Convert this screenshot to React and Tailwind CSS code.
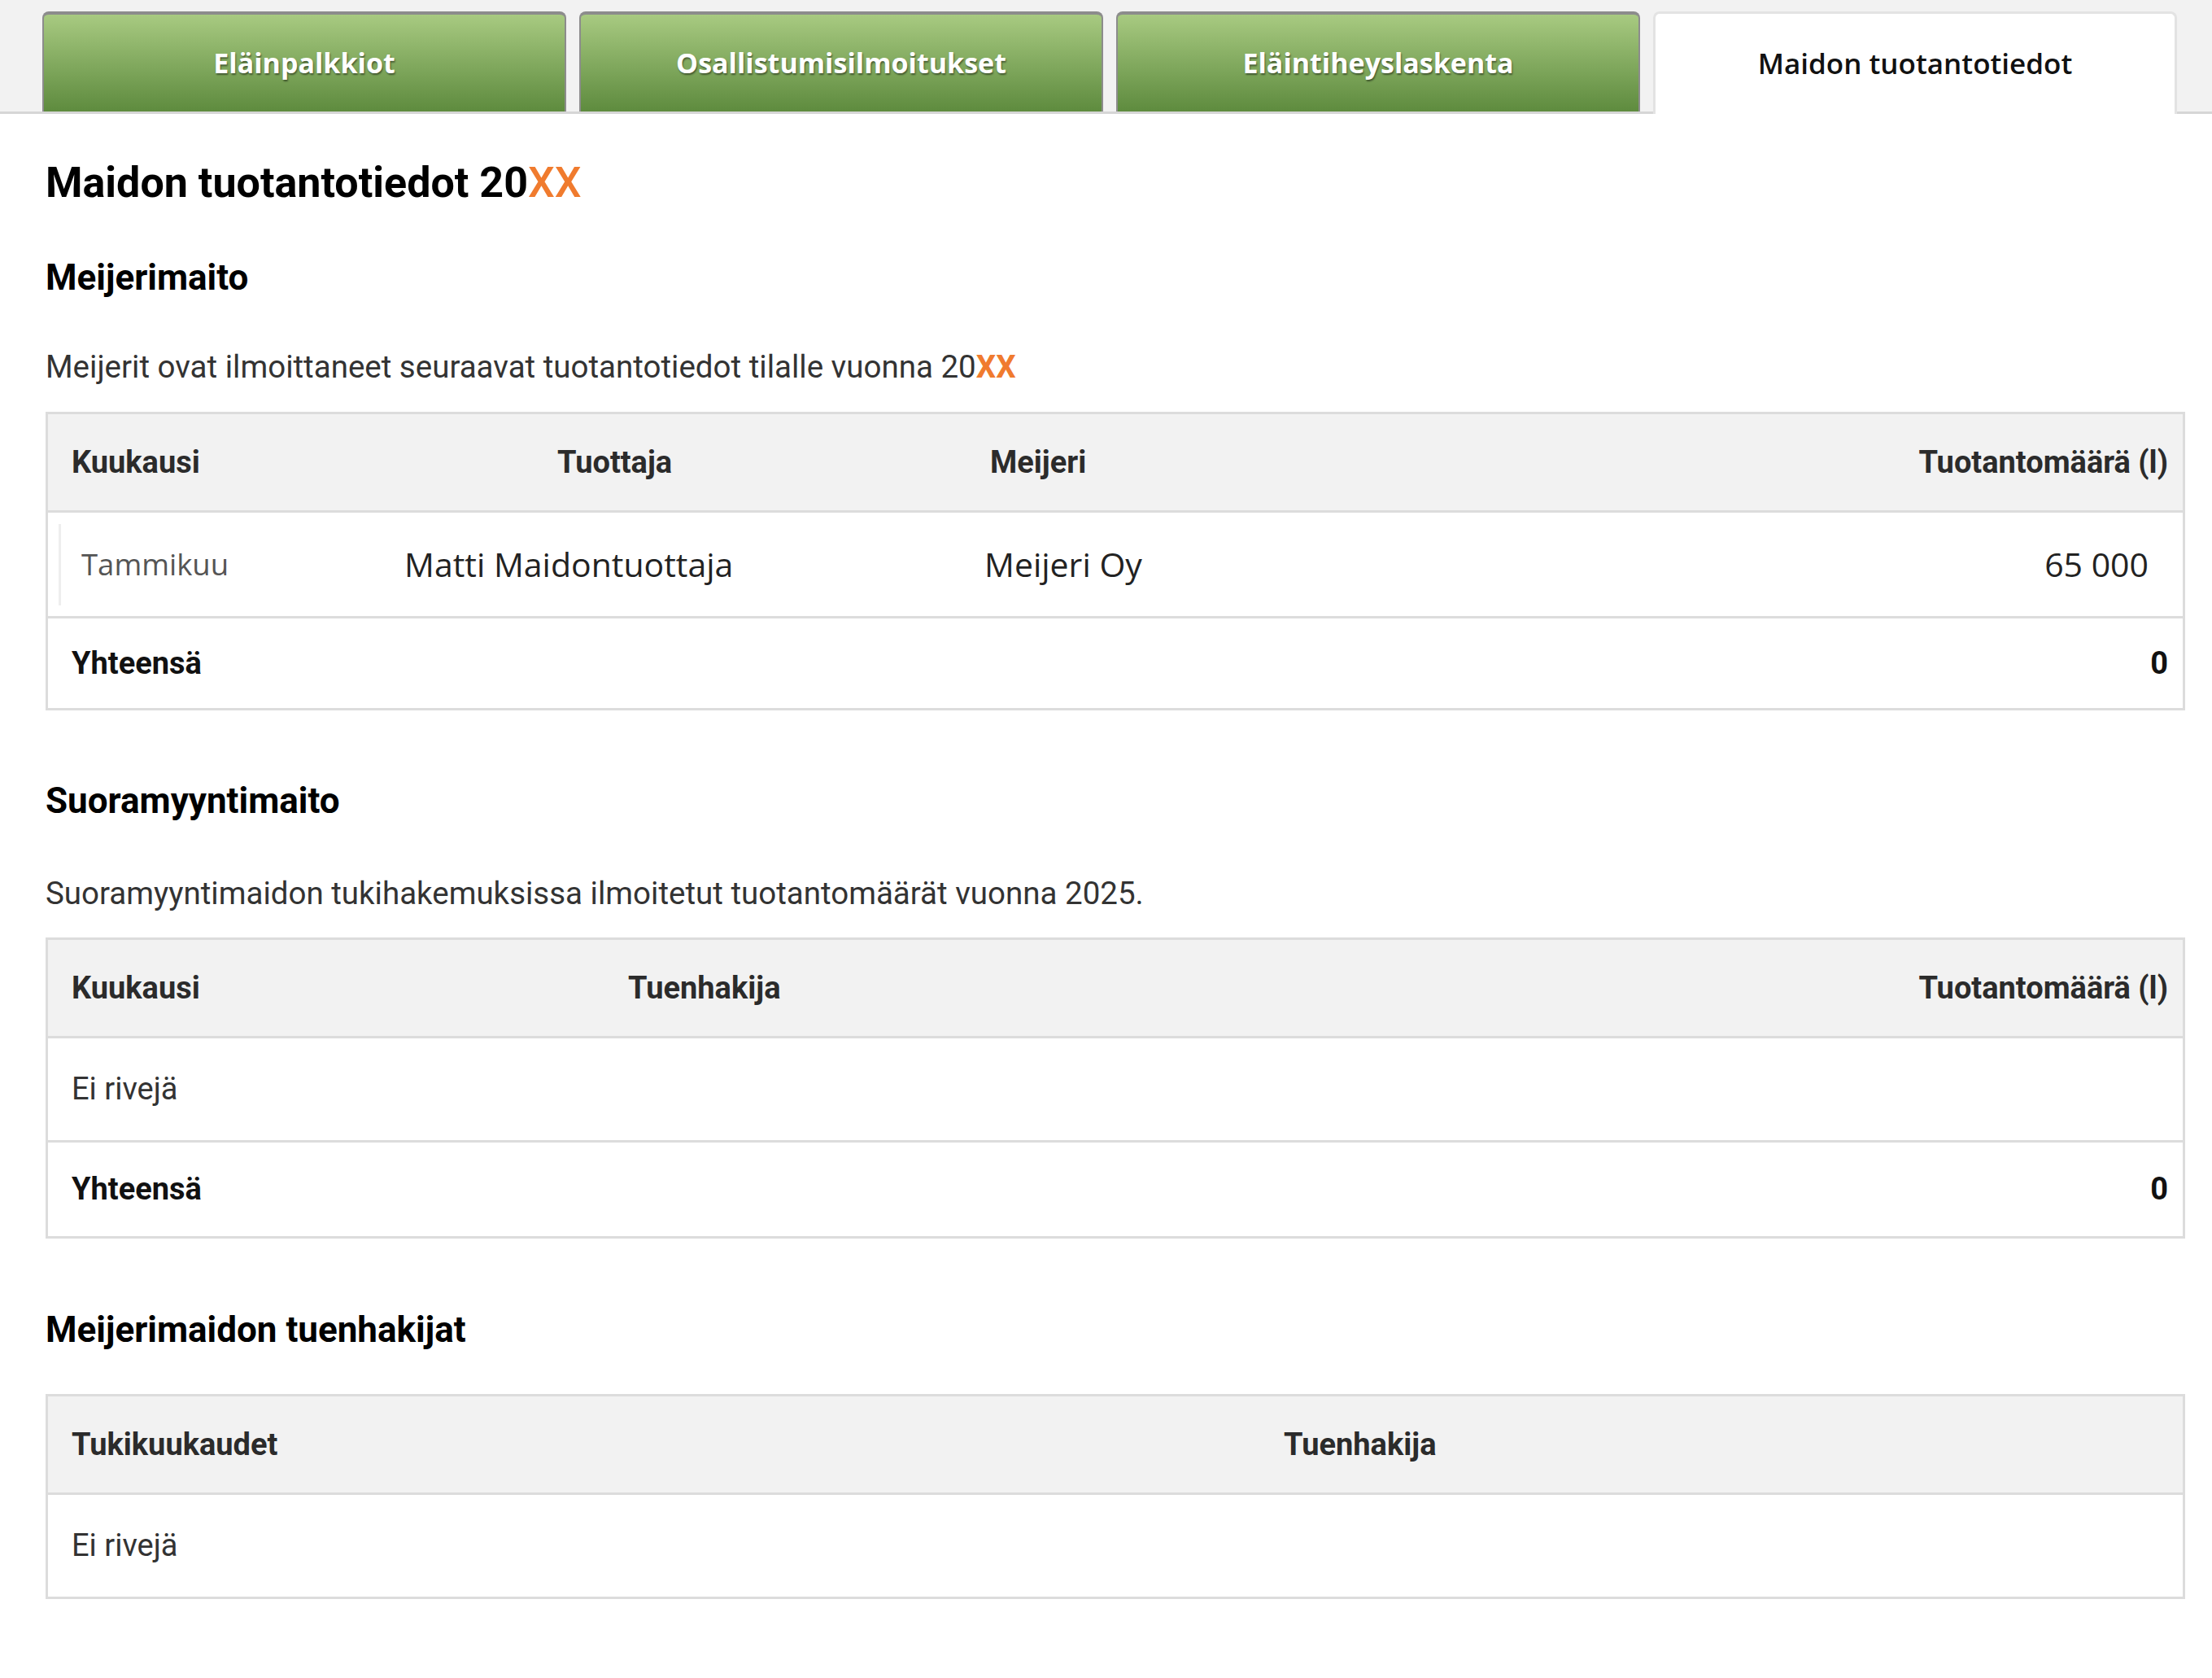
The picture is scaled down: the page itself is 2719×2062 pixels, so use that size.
import React from "react";

const tabs = [
  { label: "Eläinpalkkiot", active: false },
  { label: "Osallistumisilmoitukset", active: false },
  { label: "Eläintiheyslaskenta", active: false },
  { label: "Maidon tuotantotiedot", active: true },
];

const Tab = ({ label, active }) => {
  if (active) {
    return (
      <div className="w-[644px] h-[126px] -mb-[3px] bg-white rounded-t-[8px] border-[3px] border-b-0 border-[#e3e3e3] flex items-center justify-center">
        <span className="font-['Open_Sans',sans-serif] text-[35px] font-semibold text-[#111]">
          {label}
        </span>
      </div>
    );
  }
  return (
    <div className="w-[644px] h-[123px] rounded-t-[8px] border-t-[4px] border-x-[2px] border-[#8c8c8c] bg-linear-to-b from-[#a8ca81] to-[#5e8b3e] flex items-center justify-center">
      <span className="font-['Open_Sans',sans-serif] text-[34px] font-bold text-white [text-shadow:1px_2px_2px_rgba(0,0,0,0.45)]">
        {label}
      </span>
    </div>
  );
};

const H2 = ({ children, className = "" }) => (
  <h2 className={`font-[Roboto,sans-serif] text-[44px] leading-[44px] font-bold text-black ${className}`}>
    {children}
  </h2>
);

const Orange = ({ children, weight = "font-bold" }) => (
  <span className={`text-[#f07b2e] ${weight}`}>{children}</span>
);

const App = () => {
  return (
    <div className="w-[2719px] min-h-[2062px] bg-white font-[Roboto,sans-serif]">
      {/* Tab bar */}
      <div className="h-[140px] bg-[#f2f2f2] border-b-[3px] border-[#d6d6d6] flex items-end gap-[16px] pl-[52px]">
        {tabs.map((t) => (
          <Tab key={t.label} label={t.label} active={t.active} />
        ))}
      </div>

      <div className="pl-[56px] pr-[33px] pb-[98px]">
        <h1 className="mt-[59px] text-[52px] leading-[52px] font-bold text-black">
          Maidon tuotantotiedot 20<Orange weight="font-medium">XX</Orange>
        </h1>

        {/* Meijerimaito */}
        <H2 className="mt-[68px]">Meijerimaito</H2>
        <p className="mt-[68px] text-[38.5px] leading-[39px] text-[#333]">
          Meijerit ovat ilmoittaneet seuraavat tuotantotiedot tilalle vuonna 20
          <Orange>XX</Orange>
        </p>

        <div className="mt-[36px] border-[3px] border-[#dcdcdc] flex flex-col">
          <div className="h-[118px] bg-[#f2f2f2] flex items-center pl-[29px] pr-[18px] text-[38px] font-bold text-[#2b2b2b]">
            <div className="w-[597px]">Kuukausi</div>
            <div className="w-[532px]">Tuottaja</div>
            <div className="flex-1">Meijeri</div>
            <div>Tuotantomäärä (l)</div>
          </div>
          <div className="h-[130px] border-t-[3px] border-[#dcdcdc] flex items-center pl-[13px] pr-[42px] font-['Open_Sans',sans-serif] text-[41px] text-[#222]">
            <div className="w-[425px] h-[100px] border-l-[3px] border-[#eeeeee] flex items-center pl-[25px] text-[36.5px] text-[#555]">
              Tammikuu
            </div>
            <div className="w-[713px]">Matti Maidontuottaja</div>
            <div className="flex-1">Meijeri Oy</div>
            <div>65 000</div>
          </div>
          <div className="h-[113px] border-t-[3px] border-[#dcdcdc] flex items-center pl-[29px] pr-[18px] text-[38px] font-bold text-[#111]">
            <div className="flex-1">Yhteensä</div>
            <div>0</div>
          </div>
        </div>

        {/* Suoramyyntimaito */}
        <H2 className="mt-[89px]">Suoramyyntimaito</H2>
        <p className="mt-[72px] text-[38.5px] leading-[39px] text-[#333]">
          Suoramyyntimaidon tukihakemuksissa ilmoitetut tuotantomäärät vuonna 2025.
        </p>

        <div className="mt-[35px] border-[3px] border-[#dcdcdc] flex flex-col">
          <div className="h-[118px] bg-[#f2f2f2] flex items-center pl-[29px] pr-[18px] text-[38px] font-bold text-[#2b2b2b]">
            <div className="w-[684px]">Kuukausi</div>
            <div className="flex-1">Tuenhakija</div>
            <div>Tuotantomäärä (l)</div>
          </div>
          <div className="h-[128px] border-t-[3px] border-[#dcdcdc] flex items-center pl-[29px] text-[38px] text-[#333]">
            Ei rivejä
          </div>
          <div className="h-[118px] border-t-[3px] border-[#dcdcdc] flex items-center pl-[29px] pr-[18px] text-[38px] font-bold text-[#111]">
            <div className="flex-1">Yhteensä</div>
            <div>0</div>
          </div>
        </div>

        {/* Meijerimaidon tuenhakijat */}
        <H2 className="mt-[90px]">Meijerimaidon tuenhakijat</H2>

        <div className="mt-[57px] border-[3px] border-[#dcdcdc] flex flex-col">
          <div className="h-[118px] bg-[#f2f2f2] flex items-center pl-[29px] pr-[18px] text-[38px] font-bold text-[#2b2b2b]">
            <div className="w-[1490px]">Tukikuukaudet</div>
            <div className="flex-1">Tuenhakija</div>
          </div>
          <div className="h-[128px] border-t-[3px] border-[#dcdcdc] flex items-center pl-[29px] text-[38px] text-[#333]">
            Ei rivejä
          </div>
        </div>
      </div>
    </div>
  );
};

export default App;
